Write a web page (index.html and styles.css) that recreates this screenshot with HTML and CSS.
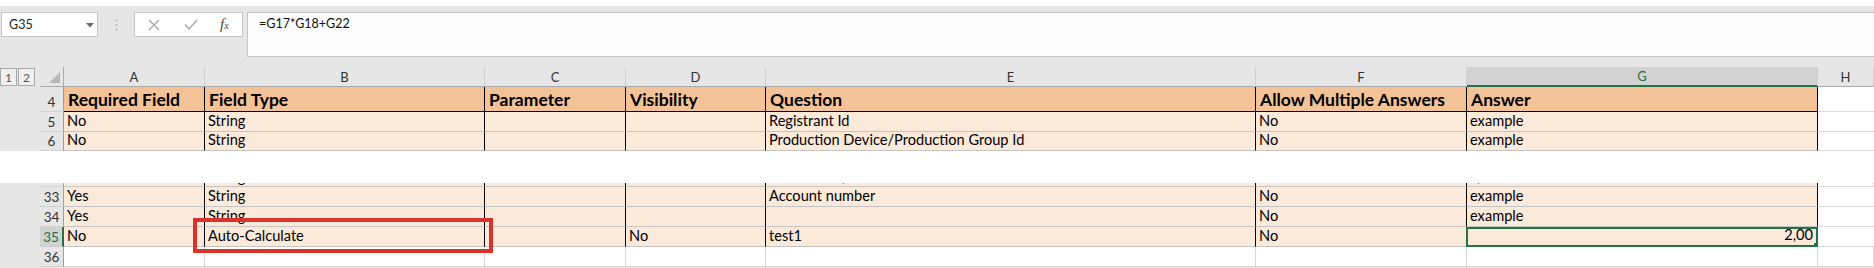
FILE: index.html
```html
<!DOCTYPE html>
<html lang="en">
<head>
  <meta charset="UTF-8">
  <title>Sheet - G35</title>
  <link rel="stylesheet" href="styles.css">
</head>
<body>
  <div class="strip"></div>

  <div class="topbar">
    <div class="namebox">
      <span>G35</span>
      <svg class="caret" width="8" height="5" viewBox="0 0 8 5"><path d="M0 0h8L4 4.5z" fill="#6a6a6a"/></svg>
    </div>
    <div class="grip">
      <svg width="3" height="12" viewBox="0 0 3 12"><circle cx="1.5" cy="1.5" r="1" fill="#b0b0b0"/><circle cx="1.5" cy="6" r="1" fill="#b0b0b0"/><circle cx="1.5" cy="10.5" r="1" fill="#b0b0b0"/></svg>
    </div>
    <div class="fxbox">
      <svg class="ico" width="12" height="12" viewBox="0 0 12 12"><path d="M1 1l10 10M11 1L1 11" stroke="#a8a8a8" stroke-width="1.3" fill="none"/></svg>
      <svg class="ico" width="14" height="11" viewBox="0 0 14 11"><path d="M1 5.5l4 4.5L13 1" stroke="#a8a8a8" stroke-width="1.4" fill="none"/></svg>
      <span class="fx">f<small>x</small></span>
    </div>
    <div class="formula">=G17*G18+G22</div>
  </div>

  <div class="sheet">
    <div class="row colhead">
      <div class="c out">
        <span class="lvl">1</span><span class="lvl">2</span>
      </div>
      <div class="c corner">
        <svg width="11" height="11" viewBox="0 0 11 11"><path d="M11 0v11H0z" fill="#b9b9b9"/></svg>
      </div>
      <div class="c ch">A</div>
      <div class="c ch">B</div>
      <div class="c ch">C</div>
      <div class="c ch">D</div>
      <div class="c ch">E</div>
      <div class="c ch">F</div>
      <div class="c ch active">G</div>
      <div class="c ch">H</div>
    </div>

    <div class="row r-head">
      <div class="c out"></div>
      <div class="c rh">4</div>
      <div class="c th">Required Field</div>
      <div class="c th">Field Type</div>
      <div class="c th">Parameter</div>
      <div class="c th">Visibility</div>
      <div class="c th">Question</div>
      <div class="c th">Allow Multiple Answers</div>
      <div class="c th">Answer</div>
      <div class="c empty"></div>
    </div>

    <div class="row r-std">
      <div class="c out"></div>
      <div class="c rh">5</div>
      <div class="c td">No</div>
      <div class="c td">String</div>
      <div class="c td"></div>
      <div class="c td"></div>
      <div class="c td">Registrant Id</div>
      <div class="c td">No</div>
      <div class="c td">example</div>
      <div class="c empty"></div>
    </div>

    <div class="row r-std short">
      <div class="c out"></div>
      <div class="c rh">6</div>
      <div class="c td">No</div>
      <div class="c td">String</div>
      <div class="c td"></div>
      <div class="c td"></div>
      <div class="c td">Production Device/Production Group Id</div>
      <div class="c td">No</div>
      <div class="c td">example</div>
      <div class="c empty"></div>
    </div>
  </div>

  <div class="cut"></div>

  <div class="sheet lower">
    <div class="row r-peek">
      <div class="c out"></div>
      <div class="c rh"></div>
      <div class="c td"></div>
      <div class="c td"><span class="peek">String</span></div>
      <div class="c td"></div>
      <div class="c td"></div>
      <div class="c td"><span class="peek dot-e">,</span></div>
      <div class="c td"></div>
      <div class="c td"><span class="peek dot-g">,</span></div>
      <div class="c empty"></div>
    </div>

    <div class="row r-std">
      <div class="c out"></div>
      <div class="c rh">33</div>
      <div class="c td">Yes</div>
      <div class="c td">String</div>
      <div class="c td"></div>
      <div class="c td"></div>
      <div class="c td">Account number</div>
      <div class="c td">No</div>
      <div class="c td">example</div>
      <div class="c empty"></div>
    </div>

    <div class="row r-std">
      <div class="c out"></div>
      <div class="c rh">34</div>
      <div class="c td">Yes</div>
      <div class="c td">String</div>
      <div class="c td"></div>
      <div class="c td"></div>
      <div class="c td"></div>
      <div class="c td">No</div>
      <div class="c td">example</div>
      <div class="c empty"></div>
    </div>

    <div class="row r-std">
      <div class="c out"></div>
      <div class="c rh active">35</div>
      <div class="c td">No</div>
      <div class="c td">Auto-Calculate</div>
      <div class="c td"></div>
      <div class="c td">No</div>
      <div class="c td">test1</div>
      <div class="c td">No</div>
      <div class="c td num selected">2,00</div>
      <div class="c empty"></div>
    </div>

    <div class="row r-std last">
      <div class="c out"></div>
      <div class="c rh">36</div>
      <div class="c empty"></div>
      <div class="c empty"></div>
      <div class="c empty"></div>
      <div class="c empty"></div>
      <div class="c empty"></div>
      <div class="c empty"></div>
      <div class="c empty"></div>
      <div class="c empty"></div>
    </div>

    <div class="callout"></div>
  </div>
</body>
</html>
```

FILE: styles.css
```css
body {
  margin: 0;
  padding: 0;
  background: #e6e6e6;
  font-family: "Lato", "Liberation Sans", sans-serif;
  color: #000;
  overflow: hidden;
}
.strip {
  height: 6px;
  background: #fff;
}

/* formula bar */
.topbar {
  display: flex;
  align-items: flex-start;
  height: 61px;
  padding: 6px 0 0 1px;
  box-sizing: border-box;
}
.namebox {
  width: 97px;
  height: 25px;
  box-sizing: border-box;
  background: #fff;
  border: 1px solid #c6c6c6;
  display: flex;
  align-items: center;
  justify-content: space-between;
  padding: 0 3px 0 7px;
  font-size: 12.5px;
  color: #222;
}
.caret {
  margin-top: 1px;
}
.grip {
  width: 36px;
  height: 25px;
  display: flex;
  align-items: center;
  justify-content: center;
}
.fxbox {
  width: 109px;
  height: 25px;
  box-sizing: border-box;
  background: #fff;
  border: 1px solid #c6c6c6;
  display: flex;
  align-items: center;
  padding-left: 13px;
}
.fxbox .ico {
  margin-right: 24px;
}
.fxbox .ico + .ico {
  margin-right: 22px;
}
.fx {
  font-family: "Liberation Serif", serif;
  font-style: italic;
  font-size: 15px;
  color: #444;
}
.fx small {
  font-size: 10px;
}
.formula {
  flex: 1;
  margin-left: 4px;
  height: 45px;
  box-sizing: border-box;
  background: #fcfcfc;
  border: 1px solid #c6c6c6;
  border-right: none;
  padding: 3px 0 0 11px;
  font-size: 12.5px;
  color: #111;
}

/* grid */
.sheet {
  position: relative;
}
.row {
  display: grid;
  grid-template-columns: 40px 24px 141px 280px 141px 140px 490px 211px 351px 56px;
}
.c {
  box-sizing: border-box;
  display: flex;
  align-items: flex-end;
  white-space: nowrap;
  overflow: hidden;
}
.out {
  background: #e6e6e6;
}
.corner {
  background: #e6e6e6;
  border-right: 1px solid #ababab;
  border-bottom: 1px solid #ababab;
  justify-content: flex-end;
  padding: 0 3px 3px 0;
}
.colhead {
  height: 20px;
}
.colhead .out {
  align-items: center;
}
.lvl {
  width: 17px;
  height: 18px;
  box-sizing: border-box;
  border: 1px solid #a8a8a8;
  background: #f0f0f0;
  font-size: 12px;
  color: #555;
  display: flex;
  align-items: center;
  justify-content: center;
}
.lvl + .lvl {
  margin-left: 1px;
}
.ch {
  background: #e6e6e6;
  border-right: 1px solid #cfcfcf;
  border-bottom: 1px solid #ababab;
  justify-content: center;
  align-items: center;
  font-size: 13px;
  color: #333;
}
.ch.active {
  background: #d2d2d2;
  color: #217346;
  border-bottom: 2px solid #217346;
}
.rh {
  background: #e6e6e6;
  border-right: 1px solid #9e9e9e;
  border-bottom: 1px solid #d0d0d0;
  justify-content: center;
  font-size: 13.5px;
  color: #333;
  padding-bottom: 1px;
}
.rh.active {
  background: #d2d2d2;
  color: #217346;
  border-right: 2px solid #217346;
}

.r-head {
  height: 25px;
}
.r-std {
  height: 20px;
}
.r-std.short {
  height: 19px;
}
.r-peek {
  height: 4px;
}
.th {
  background: #f3c297;
  border-right: 1px solid #000;
  border-bottom: 1px solid #000;
  font-weight: bold;
  font-size: 17.5px;
  padding: 0 3px 0 4px;
  line-height: 22px;
}
.td {
  background: #fbe9da;
  border-right: 1px solid #000;
  border-bottom: 1px solid #c4c4c4;
  font-size: 14.6px;
  padding: 0 3px 1px 3px;
  line-height: 18px;
}
.empty {
  background: #fff;
  border-right: 1px solid #d9d9d9;
  border-bottom: 1px solid #d9d9d9;
}
.r-head .empty,
.r-std .empty {
  border-right: none;
}
.last .empty {
  border-right: 1px solid #d9d9d9;
}
.r-peek .td {
  border-bottom: 1px solid #c4c4c4;
  padding: 0 3px;
}
.peek {
  display: block;
  height: 18px;
  line-height: 18px;
  flex: none;
}
.dot-e {
  padding-left: 73px;
}
.dot-g {
  padding-left: 7px;
}
.num {
  justify-content: flex-end;
}
.selected {
  position: relative;
  border: 2px solid #217346;
  margin-left: -1px;
  padding-right: 3px;
}
.selected::after {
  content: "";
  position: absolute;
  right: -2px;
  bottom: -2px;
  width: 5px;
  height: 5px;
  background: #217346;
  border: 1px solid #fff;
  box-sizing: border-box;
}

.cut {
  height: 32px;
  background: #fff;
}

/* annotation */
.callout {
  position: absolute;
  left: 193px;
  top: 35px;
  width: 300px;
  height: 35px;
  box-sizing: border-box;
  border: 4px solid #d9332c;
}
```
